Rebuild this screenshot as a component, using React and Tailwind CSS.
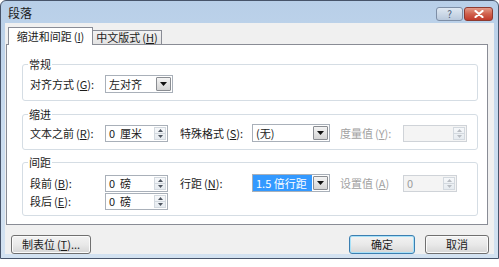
import React from 'react'

const Acc = ({ k }) => (
  <span className="ml-[2px]">
    (<span className="underline underline-offset-1">{k}</span>)
  </span>
)

function Arrow({ up, dim }) {
  return (
    <svg width="5" height="3" viewBox="0 0 5 3" className="block">
      <polygon points={up ? '0,3 5,3 2.5,0' : '0,0 5,0 2.5,3'} fill={dim ? '#b8bcc2' : '#4d5560'} />
    </svg>
  )
}

function Spin({ w, value, disabled }) {
  return (
    <div
      className={`${w} h-[17px] flex items-stretch border ${
        disabled ? 'border-[#cfd3d8] bg-[#f4f4f4] text-[#9c9c9c]' : 'border-[#a9b0b9] bg-white'
      }`}
    >
      <span className="flex-1 pl-[3px] leading-[15px] whitespace-pre">{value}</span>
      <div className="w-[12px] my-[1px] mr-[1px] flex flex-col border border-[#d3d9df] bg-gradient-to-b from-[#f6f8fa] to-[#e6ebf0]">
        <div className="flex-1 flex items-center justify-center border-b border-[#d3d9df]">
          <Arrow up dim={disabled} />
        </div>
        <div className="flex-1 flex items-center justify-center">
          <Arrow dim={disabled} />
        </div>
      </div>
    </div>
  )
}

function DropBtn() {
  return (
    <div className="w-[15px] my-[1px] mr-[1px] flex items-center justify-center border border-[#8a8d92] rounded-[1px] bg-gradient-to-b from-[#f4f4f4] to-[#d4d4d4]">
      <svg width="7" height="4" viewBox="0 0 7 4">
        <polygon points="0,0 7,0 3.5,4" fill="#111" />
      </svg>
    </div>
  )
}

function Select({ w, value, selected }) {
  return (
    <div className={`${w} h-[18px] flex items-stretch border border-[#a9b0b9] bg-white`}>
      <span
        className={`flex-1 pl-[3px] leading-[16px] whitespace-pre ${
          selected ? 'bg-[#3399ff] text-white mr-[1px]' : ''
        }`}
      >
        {value}
      </span>
      <DropBtn />
    </div>
  )
}

function Group({ label, h, mt, children }) {
  return (
    <fieldset className={`${h} ${mt} w-[456px] border border-[#d5dde4] rounded-[3px] px-0 pb-0`}>
      <legend className="ml-[5px] px-[1px] leading-[13px]">{label}</legend>
      {children}
    </fieldset>
  )
}

function WinBtn({ children, def, w }) {
  return (
    <div
      className={`${w} h-[19px] rounded-[3px] border flex items-center justify-center bg-gradient-to-b from-[#f3f3f3] via-[#e9e9e9] to-[#d6d6d6] ${
        def ? 'border-[#3c7fb1] shadow-[inset_0_0_0_1px_#a8e1f8]' : 'border-[#707070] shadow-[inset_0_0_0_1px_#fbfbfb]'
      }`}
    >
      {children}
    </div>
  )
}

export default function App() {
  return (
    <div className="w-[499px] h-[267px] bg-white text-[11px] text-[#1b1b1b] font-['Noto_Sans_CJK_SC','Noto_Sans',sans-serif] overflow-hidden">
      <div className="w-[499px] h-[259px] border border-[#47546a] rounded-t-[6px] bg-gradient-to-b from-[#b8cfe8] via-[#cadcef] to-[#d3e2f1] flex flex-col">
        {/* title bar */}
        <div className="h-[22px] flex items-start">
          <span className="ml-[7px] mt-[5px] leading-[14px] text-[12px] text-[#1a1a1a]">段落</span>
          <div className="ml-auto mr-[5px] mt-[6px] flex gap-[1px]">
            <div className="w-[27px] h-[14px] rounded-[3px] border border-[#7d8ea6] bg-gradient-to-b from-[#dfe8f2] to-[#b9c9dc] flex items-center justify-center text-[10px] leading-none text-[#4a5d78]">
              ?
            </div>
            <div className="w-[29px] h-[14px] rounded-[3px] border border-[#8e3a30] bg-gradient-to-b from-[#e39a89] via-[#d0604d] to-[#c0392b] flex items-center justify-center">
              <svg width="10" height="8" viewBox="0 0 10 8">
                <path d="M1.5 1 L8.5 7 M8.5 1 L1.5 7" stroke="#fff" strokeWidth="2.2" strokeLinecap="round" />
              </svg>
            </div>
          </div>
        </div>

        {/* client area */}
        <div className="mx-[4px] mb-[4px] flex-1 bg-[#f0f0f0] flex flex-col">
          {/* tabs */}
          <div className="mt-[4px] ml-[3px] flex items-end h-[17px]">
            <div className="relative z-10 w-[85px] h-[18px] -mb-px bg-white border border-b-0 border-[#898c95] flex items-center justify-center whitespace-nowrap">
              缩进和间距<Acc k="I" />
            </div>
            <div className="w-[70px] h-[14px] -ml-px bg-gradient-to-b from-[#f2f2f2] to-[#e3e3e3] border border-b-0 border-[#898c95] flex items-center justify-center whitespace-nowrap">
              中文版式<Acc k="H" />
            </div>
          </div>

          {/* panel */}
          <div className="ml-[1px] w-[482px] h-[181px] bg-white border border-[#898c95] pl-[15px] pt-[13px]">
            <Group label="常规" h="h-[43px]">
              <div className="mt-[4px] pl-[7px] flex items-center">
                <span className="w-[75px] whitespace-nowrap">
                  对齐方式<Acc k="G" />:
                </span>
                <Select w="w-[68px]" value="左对齐" />
              </div>
            </Group>

            <Group label="缩进" h="h-[42px]" mt="mt-[7px]">
              <div className="mt-[3px] pl-[7px] flex items-center">
                <span className="w-[75px] whitespace-nowrap">
                  文本之前<Acc k="R" />:
                </span>
                <Spin w="w-[63px]" value="0  厘米" />
                <span className="ml-[12px] w-[72px] whitespace-nowrap">
                  特殊格式<Acc k="S" />:
                </span>
                <Select w="w-[78px]" value="(无)" />
                <span className="ml-[10px] w-[63px] whitespace-nowrap text-[#a2a2a2]">
                  度量值<Acc k="Y" />:
                </span>
                <Spin w="w-[64px]" value="" disabled />
              </div>
            </Group>

            <Group label="间距" h="h-[60px]" mt="mt-[6px]">
              <div className="mt-[5px] pl-[7px] flex items-center">
                <span className="w-[75px] whitespace-nowrap">
                  段前<Acc k="B" />:
                </span>
                <Spin w="w-[63px]" value="0  磅" />
                <span className="ml-[12px] w-[72px] whitespace-nowrap">
                  行距<Acc k="N" />:
                </span>
                <Select w="w-[78px]" value="1.5 倍行距" selected />
                <span className="ml-[10px] w-[63px] whitespace-nowrap text-[#a2a2a2]">
                  设置值<Acc k="A" />
                </span>
                <Spin w="w-[54px]" value="0" disabled />
              </div>
              <div className="mt-[1px] pl-[7px] flex items-center">
                <span className="w-[75px] whitespace-nowrap">
                  段后<Acc k="E" />:
                </span>
                <Spin w="w-[63px]" value="0  磅" />
              </div>
            </Group>
          </div>

          {/* buttons */}
          <div className="mt-[10px] flex items-center">
            <div className="ml-[6px]">
              <WinBtn w="w-[80px]">
                <span className="whitespace-nowrap">
                  制表位<Acc k="T" />...
                </span>
              </WinBtn>
            </div>
            <div className="ml-auto mr-[5px] flex gap-[10px]">
              <WinBtn w="w-[66px]" def>
                确定
              </WinBtn>
              <WinBtn w="w-[64px]">取消</WinBtn>
            </div>
          </div>
        </div>
      </div>
    </div>
  )
}
